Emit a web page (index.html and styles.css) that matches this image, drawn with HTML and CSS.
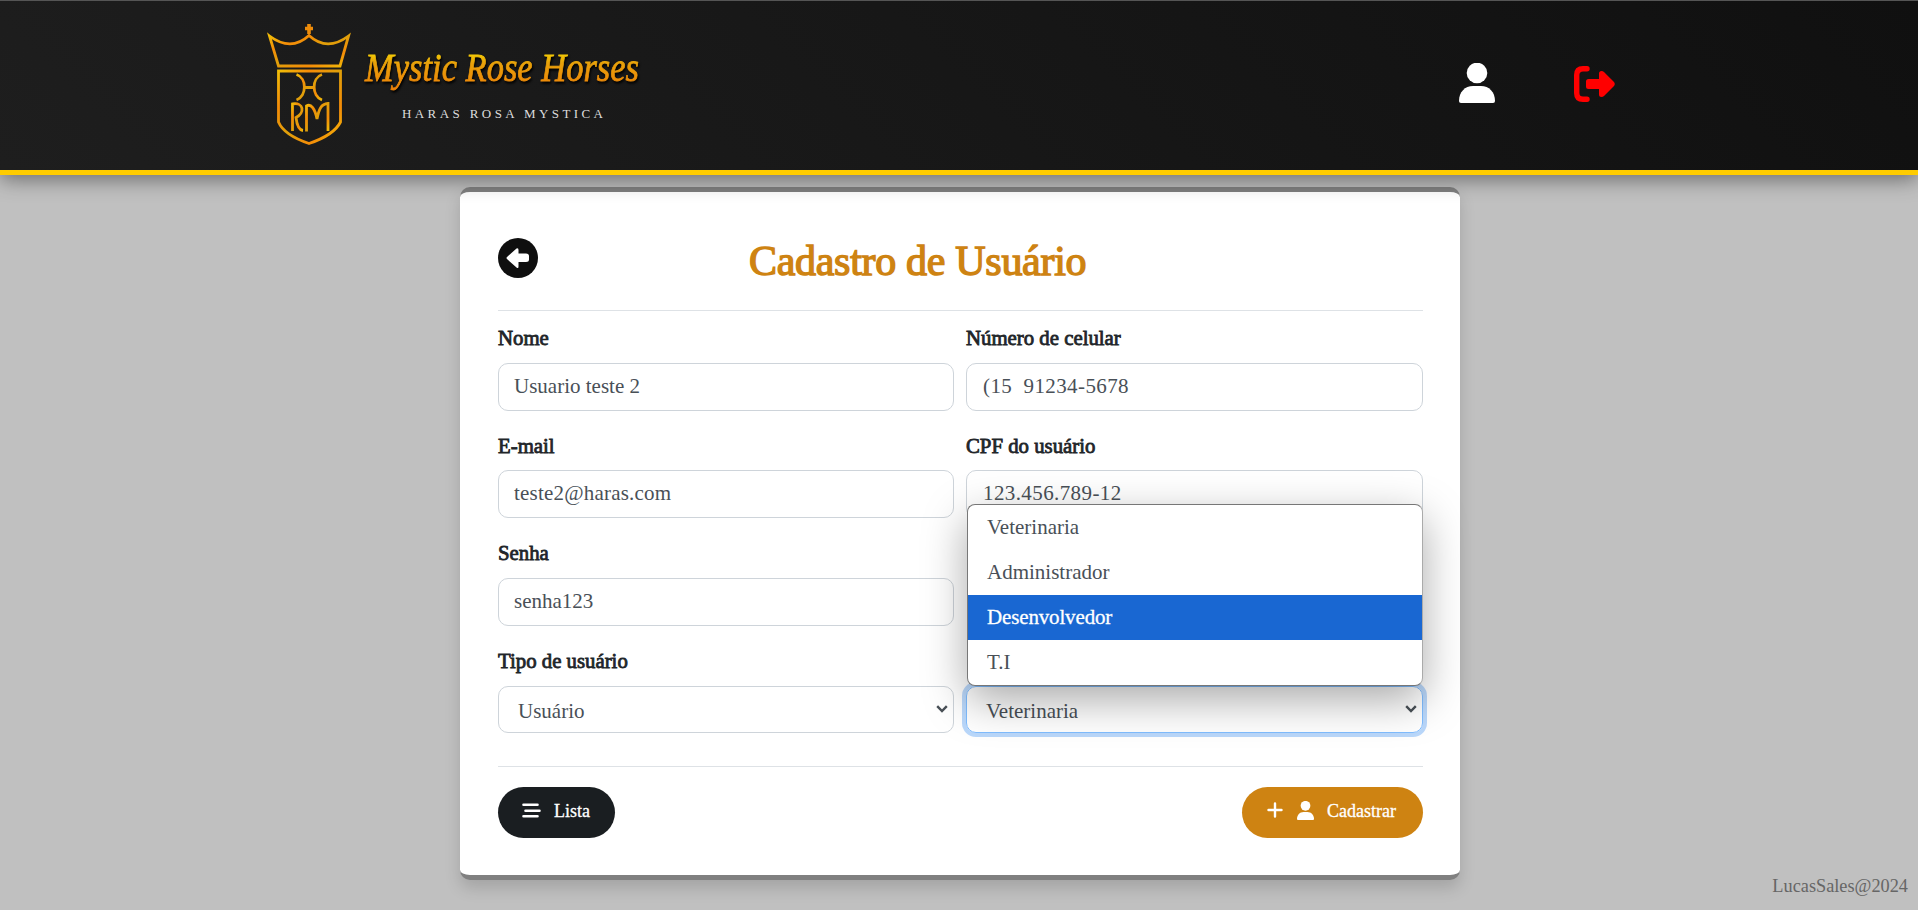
FILE: index.html
```html
<!DOCTYPE html>
<html lang="pt-BR">
<head>
<meta charset="utf-8">
<title>Cadastro de Usuário</title>
<link rel="stylesheet" href="styles.css">
</head>
<body>
<header class="topbar">
  <svg class="logo" width="420" height="150" viewBox="0 0 420 150" role="img" aria-label="Mystic Rose Horses">
    <defs>
      <linearGradient id="gold" x1="0" y1="0" x2=".5" y2=".5" spreadMethod="reflect">
        <stop offset="0" stop-color="#f0bd08"/>
        <stop offset=".5" stop-color="#f48c08"/>
        <stop offset="1" stop-color="#dfa00a"/>
      </linearGradient>
      <linearGradient id="goldText" x1="0" y1="40" x2="0" y2="82" gradientUnits="userSpaceOnUse">
        <stop offset="0" stop-color="#fff000"/>
        <stop offset=".4" stop-color="#e8a20a"/>
        <stop offset="1" stop-color="#ee8208"/>
      </linearGradient>
    </defs>
    <g fill="none" stroke="url(#gold)" stroke-width="2.8" transform="translate(-250 -6)">
      <path d="M309 24v10M305 28.500h8" stroke-width="3.600" stroke="#ee8c0a"/>
      <path d="M269.500 36Q291 52 309 35.500Q327 52 348.500 36L340 66H278.500Z"/>
      <path d="M278.500 71H340.500V122Q334 135 309 143.500Q284 135 278.500 122Z"/>
      <path d="M296.500 74.500C307 78 307 96 296.500 100M322 74.500C311.500 78 311.500 96 322 100M304.500 87.500h9"/>
      <path d="M292.500 131V104C304 102 305 113 296 117.500C297 126 299 130 303 130.500"/>
      <path d="M306.500 131.500V106C311 103 315 109 317 119C319 109 321 104 328 103.500V131"/>
    </g>
    <text class="logo-name" x="115" y="75" textLength="274" lengthAdjust="spacingAndGlyphs">Mystic Rose Horses</text>
    <text class="logo-tag" x="152" y="111.500" textLength="201">HARAS ROSA MYSTICA</text>
  </svg>
  <nav class="actions">
    <svg width="36" height="40" viewBox="0 0 36 40" fill="#fff"><circle cx="18" cy="10" r="10.300"/><path d="M0 38C0 29 6 23 14 23h8c8 0 14 6 14 15q0 2-2 2H2q-2 0-2-2Z"/></svg>
    <svg class="exit" width="41" height="36" viewBox="0 0 41 36"><path d="M13 2.700H9Q2.700 2.700 2.700 9V27Q2.700 33.300 9 33.300H13" fill="none" stroke="red" stroke-width="5.400" stroke-linecap="round"/><path d="M14.500 13H25V7.500Q25 5 27.500 5Q29 5 30 6L40 16Q41.500 18 40 20L30 30Q29 31 27.500 31Q25 31 25 28.500V23H14.500Q12 23 12 20.500V15.500Q12 13 14.500 13Z" fill="red"/></svg>
  </nav>
</header>
<main class="card">
  <div class="heading">
    <svg class="back" width="40" height="40" viewBox="0 0 40 40"><circle cx="20" cy="20" r="20" fill="#0f0f0f"/><path d="M9 19L18.500 10.500Q20.500 9.500 20.500 12V15.500H28Q31 15.500 31 18V21.500Q31 24 28 24H20.500V28.500Q20.500 31 18.500 29.500L9 21Q8 20 9 19Z" fill="#fff"/></svg>
    <h1>Cadastro de Usuário</h1>
  </div>
  <form class="form">
    <div class="field"><label>Nome</label><div class="control">Usuario teste 2</div></div>
    <div class="field"><label>Número de celular</label><div class="control number">(15&nbsp; 91234-5678</div></div>
    <div class="field"><label>E-mail</label><div class="control mail">teste2@haras.com</div></div>
    <div class="field"><label>CPF do usuário</label><div class="control number">123.456.789-12</div></div>
    <div class="field"><label>Senha</label><div class="control">senha123</div></div>
    <div class="field"></div>
    <div class="field"><label>Tipo de usuário</label><div class="control select">Usuário<svg class="chev" width="12" height="8" viewBox="0 0 12 8"><path d="M1.200 1.200L6 6L10.800 1.200"/></svg></div></div>
    <div class="field end">
      <div class="control select focus">Veterinaria<svg class="chev" width="12" height="8" viewBox="0 0 12 8"><path d="M1.200 1.200L6 6L10.800 1.200"/></svg></div>
      <ul class="menu">
        <li>Veterinaria</li>
        <li>Administrador</li>
        <li class="on">Desenvolvedor</li>
        <li>T.I</li>
      </ul>
    </div>
  </form>
  <div class="buttons">
    <button class="btn dark"><svg width="19" height="15" viewBox="0 0 19 15" fill="none" stroke="#fff" stroke-width="2.600" stroke-linecap="round"><path d="M1.500 1.700H15.500M3.500 7.700H17.500M1.500 13.300H15.500"/></svg><span>Lista</span></button>
    <button class="btn gold"><svg width="16" height="16" viewBox="0 0 16 16" fill="none" stroke="#fff" stroke-width="2.400" stroke-linecap="round"><path d="M8 1.500V14.500M1.500 8H14.500"/></svg><svg width="17" height="19" viewBox="0 0 36 40" fill="#fff"><circle cx="18" cy="10" r="10.300"/><path d="M0 38C0 29 6 23 14 23h8c8 0 14 6 14 15q0 2-2 2H2q-2 0-2-2Z"/></svg><span>Cadastrar</span></button>
  </div>
</main>
<footer class="credit">LucasSales@2024</footer>
</body>
</html>
```
FILE: styles.css
```css
* { box-sizing: border-box; }
body {
  margin: 0;
  height: 910px;
  overflow: hidden;
  position: relative;
  background: #c0c0c0;
  color: #212529;
  font-family: "Liberation Serif", serif;
}
.topbar {
  position: relative;
  z-index: 2;
  height: 175px;
  padding: 5px 303px 0 250px;
  display: flex;
  justify-content: space-between;
  align-items: flex-start;
  background: linear-gradient(45deg, #1e1e1e, #101010);
  border-top: 1px solid #555;
  border-bottom: 5px solid #fc0;
  box-shadow: 0 4px 20px rgba(0, 0, 0, .45);
}
.logo-name {
  font: italic 41px "Liberation Serif", serif;
  fill: url(#goldText);
  stroke: url(#goldText);
  stroke-width: .8px;
  filter: drop-shadow(1px 2px 1px #000);
}
.logo-tag { font: 13px "Liberation Serif", serif; fill: #ddd; }
.actions { display: flex; gap: 79px; align-items: center; margin-top: 57px; }
.exit { margin-top: 2px; }
.card {
  width: 1000px;
  height: 693px;
  margin: 12px 0 0 460px;
  padding: 46px 37px 0 38px;
  background: #fff;
  border-top: 5px solid #808080;
  border-bottom: 5px solid #808080;
  border-radius: 10px;
  box-shadow: 0 8px 16px rgba(0, 0, 0, .15);
}
.heading {
  display: grid;
  grid-template-columns: 251px 1fr;
  height: 73px;
  border-bottom: 1px solid #dee2e6;
}
.back { margin-left: -.5px; }
h1 {
  margin: -1px 0 0;
  font-size: 42px;
  font-weight: normal;
  line-height: 48px;
  letter-spacing: -.3px;
  color: #ce8312;
  white-space: nowrap;
  -webkit-text-stroke: 1.400px #ce8312;
}
.form { display: grid; grid-template-columns: 456px 457px; column-gap: 12px; padding-top: 11px; grid-auto-rows: 107.700px; }
.field { position: relative; }
label { display: block; height: 40.500px; line-height: 31px; font-size: 20.800px; -webkit-text-stroke: .8px #212529; }
.control {
  height: 48px;
  padding: 0 15px;
  border: 1px solid #ced4da;
  border-radius: 10px;
  color: #495057;
  font-size: 21px;
  line-height: 45px;
}
.number { letter-spacing: .4px; padding-left: 16px; }
.mail { letter-spacing: .2px; }
.select { height: 47px; display: flex; justify-content: space-between; align-items: center; padding: 4px 5px 0 19px; }
.chev { fill: none; stroke: #495057; stroke-width: 2.400; margin-top: -4px; }
.end { padding-top: 40.500px; }
.focus { border-color: #80bdff; box-shadow: 0 0 0 4px rgba(0, 110, 240, .27); }
.menu {
  position: absolute;
  left: 1px;
  top: -141px;
  width: 456px;
  margin: 0;
  padding: 0;
  overflow: hidden;
  list-style: none;
  background: #fff;
  border: 1px solid #777;
  border-right-color: #aaa;
  border-radius: 8px;
  box-shadow: 0 14px 44px rgba(0, 0, 0, .34);
}
.menu li { height: 45px; padding-left: 19px; font-size: 21px; line-height: 45px; color: #495057; }
.menu .on { background: #1967d2; color: #fff; -webkit-text-stroke: .3px #fff; letter-spacing: -.15px; }
.buttons { display: flex; justify-content: space-between; margin-top: 13px; padding-top: 20px; border-top: 1px solid #dee2e6; }
.btn { display: flex; align-items: center; height: 51px; padding: 0; border: 0; border-radius: 26px; color: #fff; font: 18px "Liberation Serif", serif; -webkit-text-stroke: .3px #fff; }
.btn svg { margin-top: -4px; flex: none; }
.btn span { margin-top: -1px; }
.dark { width: 117px; padding-left: 24px; gap: 13px; background: #1a1e21; }
.gold { width: 181px; padding-left: 25px; gap: 13.500px; background: #ce8312; }
.credit { position: absolute; right: 10px; bottom: 13px; font-size: 18.300px; line-height: 22px; color: #666; }
```
